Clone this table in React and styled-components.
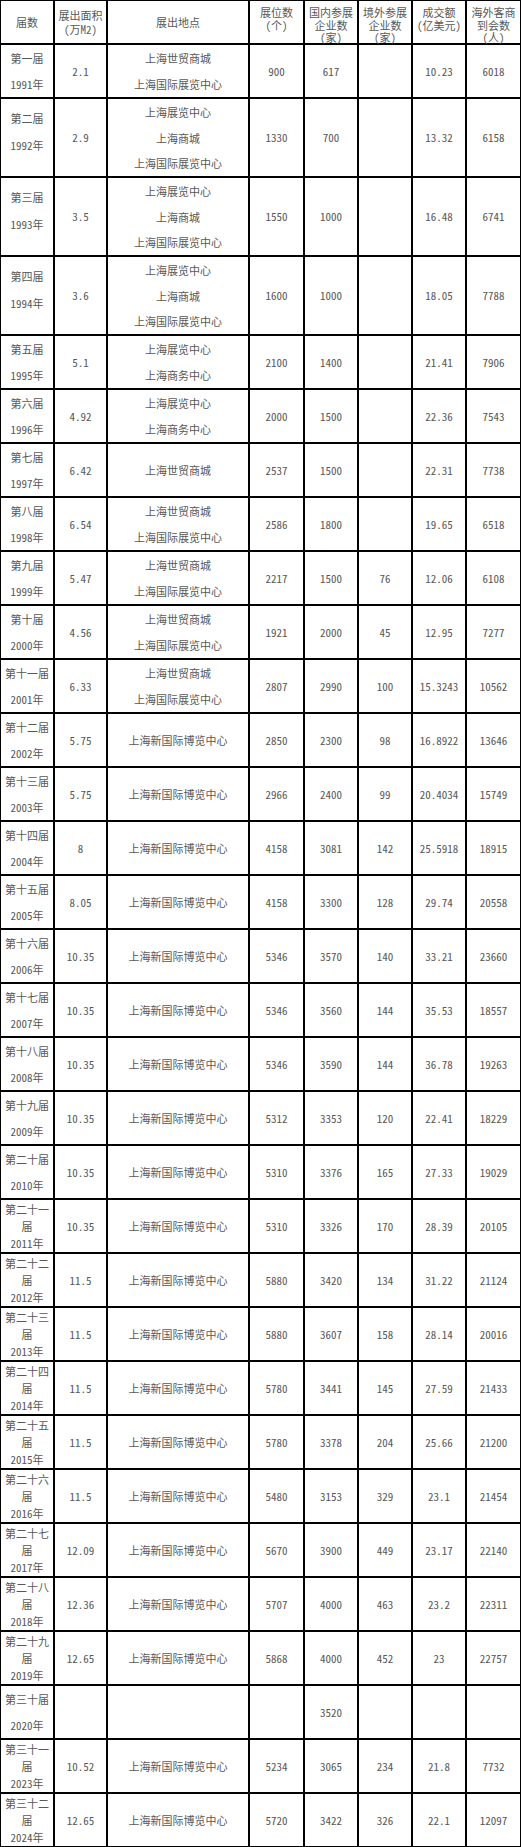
import React from "react";
import styled, { createGlobalStyle } from "styled-components";

const WTC = "上海世贸商城";
const INTL = "上海国际展览中心";
const EXPO = "上海展览中心";
const MALL = "上海商城";
const BIZ = "上海商务中心";
const NEW = "上海新国际博览中心";

const GlobalStyle = createGlobalStyle`
  html, body {
    margin: 0;
    padding: 0;
    background: #fff;
  }
  body {
    font-family: "Noto Sans CJK SC", sans-serif;
    font-size: 11px;
    font-feature-settings: "hwid" 1;
    color: #585858;
  }
`;

const Table = styled.div`
  display: grid;
  grid-template-columns: 54px 53px 142px 55px 54px 54px 54px 55px;
  width: 521px;
`;

const HeadCell = styled.div`
  box-sizing: border-box;
  height: 44px;
  border: 1px solid #000;
  display: flex;
  flex-direction: column;
  align-items: center;
  justify-content: ${(p) => (p.$stack ? "flex-start" : "center")};
  padding-top: ${(p) => (p.$stack ? "5px" : "0")};
  line-height: ${(p) => (p.$stack ? "12.5px" : "14px")};
  text-align: center;
  white-space: nowrap;
`;

const Cell = styled.div`
  box-sizing: border-box;
  height: ${(p) => p.$h}px;
  border: 1px solid #000;
  display: flex;
  flex-direction: column;
  align-items: center;
  justify-content: center;
  text-align: center;
  line-height: ${(p) => p.$lh || 27}px;
  padding: 0 1px;
`;

const Line = styled.span`
  display: block;
  min-height: 1em;
`;

const head = [
  { lines: ["届数"] },
  { lines: ["展出面积", "(万M2)"] },
  { lines: ["展出地点"] },
  { lines: ["展位数", "（个）"], stack: true },
  { lines: ["国内参展", "企业数", "（家）"], stack: true },
  { lines: ["境外参展", "企业数", "（家）"], stack: true },
  { lines: ["成交额", "(亿美元)"], stack: true },
  { lines: ["海外客商", "到会数", "（人）"], stack: true },
];

const rows = [
  ["第一届", "1991年", "2.1", [WTC, INTL], "900", "617", "", "10.23", "6018"],
  ["第二届", "1992年", "2.9", [EXPO, MALL, INTL], "1330", "700", "", "13.32", "6158"],
  ["第三届", "1993年", "3.5", [EXPO, MALL, INTL], "1550", "1000", "", "16.48", "6741"],
  ["第四届", "1994年", "3.6", [EXPO, MALL, INTL], "1600", "1000", "", "18.05", "7788"],
  ["第五届", "1995年", "5.1", [EXPO, BIZ], "2100", "1400", "", "21.41", "7906"],
  ["第六届", "1996年", "4.92", [EXPO, BIZ], "2000", "1500", "", "22.36", "7543"],
  ["第七届", "1997年", "6.42", [WTC], "2537", "1500", "", "22.31", "7738"],
  ["第八届", "1998年", "6.54", [WTC, INTL], "2586", "1800", "", "19.65", "6518"],
  ["第九届", "1999年", "5.47", [WTC, INTL], "2217", "1500", "76", "12.06", "6108"],
  ["第十届", "2000年", "4.56", [WTC, INTL], "1921", "2000", "45", "12.95", "7277"],
  ["第十一届", "2001年", "6.33", [WTC, INTL], "2807", "2990", "100", "15.3243", "10562"],
  ["第十二届", "2002年", "5.75", [NEW], "2850", "2300", "98", "16.8922", "13646"],
  ["第十三届", "2003年", "5.75", [NEW], "2966", "2400", "99", "20.4034", "15749"],
  ["第十四届", "2004年", "8", [NEW], "4158", "3081", "142", "25.5918", "18915"],
  ["第十五届", "2005年", "8.05", [NEW], "4158", "3300", "128", "29.74", "20558"],
  ["第十六届", "2006年", "10.35", [NEW], "5346", "3570", "140", "33.21", "23660"],
  ["第十七届", "2007年", "10.35", [NEW], "5346", "3560", "144", "35.53", "18557"],
  ["第十八届", "2008年", "10.35", [NEW], "5346", "3590", "144", "36.78", "19263"],
  ["第十九届", "2009年", "10.35", [NEW], "5312", "3353", "120", "22.41", "18229"],
  ["第二十届", "2010年", "10.35", [NEW], "5310", "3376", "165", "27.33", "19029"],
  ["第二十一届", "2011年", "10.35", [NEW], "5310", "3326", "170", "28.39", "20105"],
  ["第二十二届", "2012年", "11.5", [NEW], "5880", "3420", "134", "31.22", "21124"],
  ["第二十三届", "2013年", "11.5", [NEW], "5880", "3607", "158", "28.14", "20016"],
  ["第二十四届", "2014年", "11.5", [NEW], "5780", "3441", "145", "27.59", "21433"],
  ["第二十五届", "2015年", "11.5", [NEW], "5780", "3378", "204", "25.66", "21200"],
  ["第二十六届", "2016年", "11.5", [NEW], "5480", "3153", "329", "23.1", "21454"],
  ["第二十七届", "2017年", "12.09", [NEW], "5670", "3900", "449", "23.17", "22140"],
  ["第二十八届", "2018年", "12.36", [NEW], "5707", "4000", "463", "23.2", "22311"],
  ["第二十九届", "2019年", "12.65", [NEW], "5868", "4000", "452", "23", "22757"],
  ["第三十届", "2020年", "", [], "", "3520", "", "", ""],
  ["第三十一届", "2023年", "10.52", [NEW], "5234", "3065", "234", "21.8", "7732"],
  ["第三十二届", "2024年", "12.65", [NEW], "5720", "3422", "326", "22.1", "12097"],
];

function Row({ data }) {
  const [no, year, area, places, booths, dom, abroad, deal, buyers] = data;
  const tall = places.length > 2;
  const h = tall ? 79 : 54;
  const compact = no.length > 4;
  return (
    <>
      <Cell $h={h} $lh={compact ? 17 : 27}>
        <Line>{no}</Line>
        <Line>{year}</Line>
        {tall && <Line />}
      </Cell>
      <Cell $h={h}>{area}</Cell>
      <Cell $h={h}>
        {places.map((p) => (
          <Line key={p}>{p}</Line>
        ))}
      </Cell>
      <Cell $h={h}>{booths}</Cell>
      <Cell $h={h}>{dom}</Cell>
      <Cell $h={h}>{abroad}</Cell>
      <Cell $h={h}>{deal}</Cell>
      <Cell $h={h}>{buyers}</Cell>
    </>
  );
}

export default function App() {
  return (
    <>
      <GlobalStyle />
      <Table>
        {head.map((c, i) => (
          <HeadCell key={i} $stack={c.stack}>
            <span>
              {c.lines.map((l, j) => (
                <React.Fragment key={l}>
                  {j > 0 && <br />}
                  {l}
                </React.Fragment>
              ))}
            </span>
          </HeadCell>
        ))}
        {rows.map((r) => (
          <Row key={r[0]} data={r} />
        ))}
      </Table>
    </>
  );
}
